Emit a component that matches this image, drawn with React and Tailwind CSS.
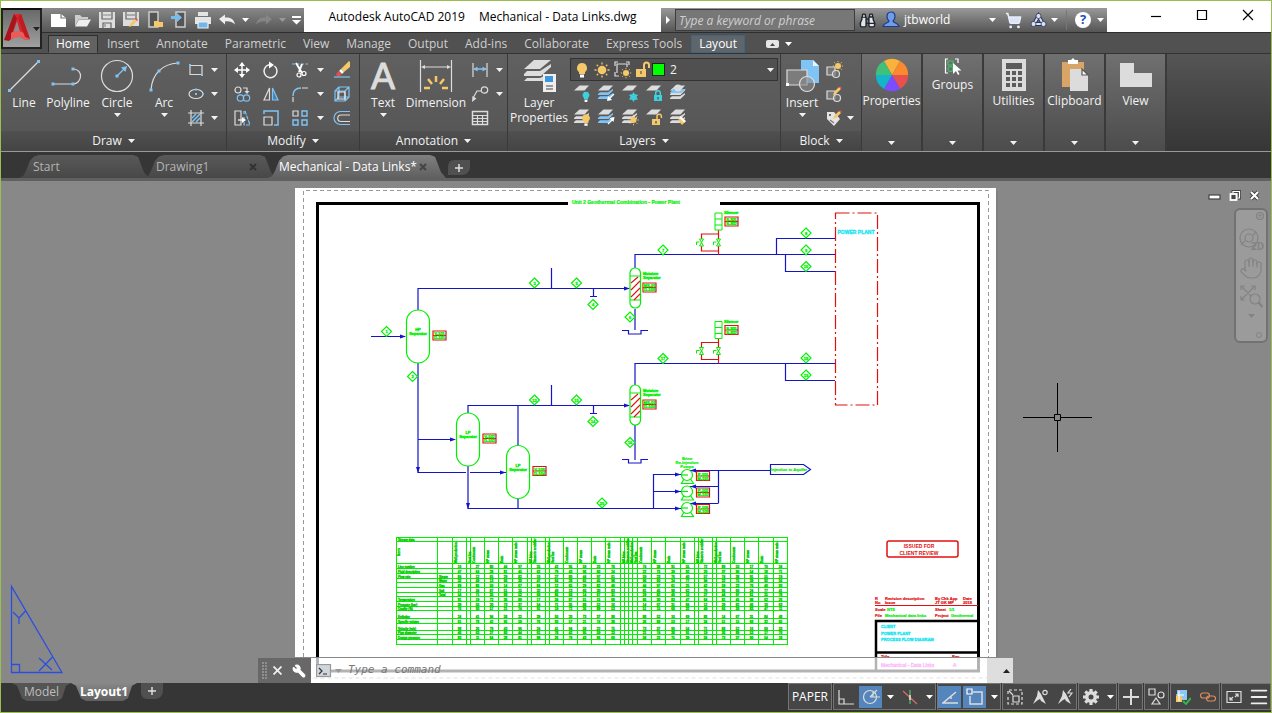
import React, { useState } from 'react';
import { Wrench, Hand, ShoppingCart, Binoculars, Settings, Menu } from 'lucide-react';

const LIGHT = '#dcdcdc';
const BLUE = '#7fc4f5';
const GOLD = '#f5c869';

const Caret = ({ className = '' }) => (
  <svg width="7" height="4" viewBox="0 0 7 4" className={`shrink-0 ${className}`}>
    <path d="M0 0h7L3.500 4z" fill="currentColor" />
  </svg>
);

const Glyph = ({ size = 18, w, h, children }) => (
  <svg
    width={w || size}
    height={h || size}
    viewBox={`0 0 ${w || size} ${h || size}`}
    fill="none"
    stroke={LIGHT}
    strokeWidth="1.2"
    className="shrink-0"
  >
    {children}
  </svg>
);

// Small square handle used at the ends of the drawing tools
const Dot = ({ x, y }) => <rect x={x - 1.5} y={y - 1.5} width="3" height="3" fill={BLUE} stroke="none" />;
const TinyDot = ({ x, y }) => <rect x={x - 1} y={y - 1} width="2" height="2" fill={BLUE} stroke="none" />;

const Bulb = ({ x, y, s = 1, fill = GOLD }) => (
  <g transform={`translate(${x} ${y}) scale(${s})`} stroke="none">
    <path d="M0 -6a5 5 0 0 1 3 9v2h-6v-2a5 5 0 0 1 3-9z" fill={fill} />
    <rect x="-2" y="5.500" width="4" height="3" fill="#fff" />
  </g>
);

const Sun = ({ x, y, s = 1 }) => (
  <g transform={`translate(${x} ${y}) scale(${s})`} stroke={GOLD} strokeWidth="1.3">
    <circle r="4.300" fill={GOLD} stroke="none" />
    <path d="M0-7.500v2M0 5.500v2M-7.500 0h2M5.500 0h2M-5.300-5.300l1.400 1.400M3.900 3.900l1.400 1.400M-5.300 5.300l1.400-1.400M3.900-3.900l1.400-1.400" />
  </g>
);

const Padlock = ({ x, y, fill = GOLD, open }) => (
  <g transform={`translate(${x} ${y})`}>
    <rect x="-4" y="-1" width="8" height="6" fill={fill} stroke="none" />
    <path d={open ? 'M1 -1v-2.500a2.200 2.200 0 0 1 4.400 0V-2' : 'M-2.300 -1v-2a2.300 2.300 0 0 1 4.600 0v2'} stroke={fill} strokeWidth="1.500" />
    <rect x="-0.700" y="1" width="1.400" height="2.500" fill="#5a5a5a" stroke="none" />
  </g>
);

// Stack of sheets, the base of every layer icon
const Sheets = ({ n = 3, mid = LIGHT }) => (
  <g stroke="none">
    {n > 2 && <path d="M1 14l2-1.800h8l5-3.200v1.500L11.500 15H1z" fill={mid} />}
    {n > 1 && <path d="M1 10l2-1.800h8l5-3.200v1.500L11.500 11H1z" fill={mid} />}
    <path d="M6.500 1.500H16L11.500 6.500H1z" fill={LIGHT} />
  </g>
);

const Pencil = ({ x, y }) => (
  <g transform={`translate(${x} ${y})`} stroke="none">
    <path d="M0 8l1-3 5-5 2 2-5 5z" fill={GOLD} />
    <path d="M6 0l1-1 2 2-1 1z" fill="#e0504a" />
  </g>
);

const QuickIcons = [
  ['New', <Glyph key="n" h={16}><path d="M1 2h10l5 4v9H1z" fill="#fff" stroke="none" /><path d="M11 2v4h5" stroke="#777" /></Glyph>],
  ['Open', <Glyph key="o" h={16}><path d="M1 14V3h5l2 2h6v2H5z" fill="#ccc" stroke="none" /><path d="M5 7.500h12l-4 7H1z" fill="#eee" stroke="none" /></Glyph>],
  ['Save', <Glyph key="s" h={18}><path d="M1 1h16v16H1z" fill="#ddd" stroke="none" /><path d="M4 1v7h10V1M5 17v-5h8v5" stroke="#666" /><path d="M5 4h8M7 13v3" stroke="#888" /></Glyph>],
  ['Save As', <Glyph key="a" h={18}><path d="M1 1h16v14H1z" fill="#ddd" stroke="none" /><path d="M4 1v7h10V1" stroke="#666" /><path d="M5 4h8" stroke="#888" /><Pencil x={7} y={8} /></Glyph>],
  ['Open from Mobile', <Glyph key="m" h={18}><path d="M3 1h9v15H3z" fill="#555" stroke="#ccc" strokeWidth="1.500" /><path d="M8 16v-6h4l1 1h4v5z" fill={GOLD} stroke="none" /></Glyph>],
  ['Save to Mobile', <Glyph key="t" h={18}><path d="M6 1h9v15H6z" fill="#555" stroke="#ccc" strokeWidth="1.500" /><path d="M1 5h6V2l5 4.500L7 11V8H1z" fill="#75bdf0" stroke="none" /></Glyph>],
  ['Plot', <Glyph key="p" h={18}><path d="M4 1h10v4H4zM1 6h16v7H1z" fill="#e4e4e4" stroke="none" /><path d="M4 11h10v6H4z" fill="#6fb6ea" stroke="#eee" /></Glyph>],
];

const TitleBar = () => (
  <header className="relative flex h-[31px] bg-white text-black">
    <button aria-label="Application menu" className="absolute left-0 top-[7px] z-10 flex h-[41px] w-[41px] items-center border-2 border-t-[#111] border-[#222] bg-gradient-to-b from-[#6a6a6a] to-[#a0a0a0] text-[#222]">
      <svg width="30" height="34" viewBox="0 0 30 34" className="shrink-0">
        <path d="M11 2h7l9 25-4 1-7-4-5 1-4 3-5-1z" fill="#d6262e" />
        <path d="M11 2l3 4-6 20-2 3-5-1z" fill="#a8141c" />
        <path d="M14 9l-4 12 7-1z" fill="#8c8c8c" />
        <path d="M8 21c5-3 9-2 13 0l6 6-4 1c-5-4-10-4-15 0z" fill="#ec5a5a" />
        <path d="M15 6l3-4 9 25-5-2z" fill="#be1b23" />
      </svg>
      <Caret />
    </button>
    <div className="mt-[7px] ml-[41px] flex w-[262px] items-center gap-[6px] bg-gradient-to-b from-[#888] to-[#565656] pl-2 text-white">
      {QuickIcons.map(([label, icon]) => (
        <button key={label} aria-label={label}>{icon}</button>
      ))}
      <button aria-label="Undo"><Glyph h={12}><path d="M1 5l6-4.500v3c6-.5 9 2 10 7-3-3-6-3.500-10-3v3z" fill="#eee" stroke="none" /></Glyph></button>
      <Caret />
      <button aria-label="Redo"><Glyph h={12}><path d="M17 5l-6-4.500v3c-6-.5-9 2-10 7 3-3 6-3.500 10-3v3z" fill="#858585" stroke="none" /></Glyph></button>
      <Caret className="text-[#999]" />
      <button aria-label="Customize"><Glyph size={9}><path d="M0 1h9" stroke="#fff" strokeWidth="2" /><path d="M0 4h9L4.500 8.500z" fill="#fff" stroke="none" /></Glyph></button>
    </div>
    <h1 className="flex flex-1 items-center justify-center gap-[14px] whitespace-nowrap text-[12px]">
      <span>Autodesk AutoCAD 2019</span>
      <span>Mechanical - Data Links.dwg</span>
    </h1>
    <div className="mt-[7px] flex w-[446px] items-center bg-gradient-to-b from-[#999] to-[#555] text-white">
      <button aria-label="Toggle search" className="flex w-[14px] justify-center"><Glyph w={4} h={8}><path d="M0 0l4 4-4 4z" fill="#fff" stroke="none" /></Glyph></button>
      <input aria-label="Search" placeholder="Type a keyword or phrase" className="h-[22px] w-[180px] border border-[#3c3c3c] bg-[#777] px-[3px] text-[12px] italic placeholder:text-[#cfcfcf]" />
      <button aria-label="Find" className="ml-1 text-[#1d2430]"><Binoculars size={17} fill="#e4e4e4" strokeWidth={2} /></button>
      <button className="ml-[6px] flex items-center gap-1 text-[12px]">
        <Glyph><path d="M9 1c3 0 4 2 4 4.500 0 2-1 3.500-2 4.500 0 2 5 1.500 6 5.500H1c1-4 6-3.500 6-5.500-1-1-2-2.500-2-4.500C5 3 6 1 9 1z" fill="#6f9ceb" stroke="#1c3b86" /></Glyph>
        jtbworld
      </button>
      <Caret className="ml-auto" />
      <button aria-label="App store" className="ml-[9px] text-[#e8ecff]"><ShoppingCart size={17} fill="#dfe4f4" /></button>
      <button aria-label="Stay connected" className="ml-2">
        <Glyph w={17} h={16}>
          <path d="M8.500 4L4 12h9z" stroke="#2b3558" strokeWidth="4" />
          <path d="M8.500 4L4 12h9z" stroke="#dbe2f8" strokeWidth="2" />
          <circle cx="8.500" cy="4" r="2.500" fill="#dbe2f8" stroke="#2b3558" strokeWidth="0.800" />
          <circle cx="3.500" cy="12" r="2.500" fill="#dbe2f8" stroke="#2b3558" strokeWidth="0.800" />
          <circle cx="13.500" cy="12" r="2.500" fill="#dbe2f8" stroke="#2b3558" strokeWidth="0.800" />
        </Glyph>
      </button>
      <Caret className="ml-1" />
      <span className="mx-2 h-5 w-px bg-[#777]" />
      <button aria-label="Help" className="flex h-4 w-4 items-center justify-center rounded-full bg-white text-[13px] font-bold text-[#1c4fc4]">?</button>
      <Caret className="ml-[6px] mr-[3px]" />
    </div>
    <div className="flex w-[164px] items-start justify-end gap-[34px] pr-[17px] pt-2">
      <button aria-label="Minimize"><Glyph w={12} h={12}><path d="M1 7.500h10" stroke="#000" /></Glyph></button>
      <button aria-label="Maximize"><Glyph w={12} h={12}><path d="M1.500 1.500h9v9h-9z" stroke="#000" /></Glyph></button>
      <button aria-label="Close"><Glyph w={12} h={12}><path d="M1 1l10 10M11 1L1 11" stroke="#000" /></Glyph></button>
    </div>
  </header>
);

const menuTabs = ['Home', 'Insert', 'Annotate', 'Parametric', 'View', 'Manage', 'Output', 'Add-ins', 'Collaborate', 'Express Tools', 'Layout'];

const RibbonTabs = () => {
  const [active, setActive] = useState('Home');
  return (
    <nav className="flex h-[21px] items-end gap-px border-t border-[#2e2e2e] bg-[#515151] pl-[47px] text-[12px] text-[#cfcfcf]">
      {menuTabs.map((tab) => (
        <button
          key={tab}
          onClick={() => setActive(tab)}
          className={`whitespace-nowrap border px-[7px] leading-[16px] ${
            tab === active
              ? 'border-[#2e2e2e] border-b-[#626262] bg-[#626262] text-white'
              : tab === 'Layout'
                ? 'border-[#3e6684] bg-[#5e666c] text-white'
                : 'border-transparent'
          }`}
        >
          {tab}
        </button>
      ))}
      <button aria-label="Minimize ribbon" className="mb-[5px] ml-5 flex items-center gap-[6px] text-white">
        <Glyph w={13} h={8}><rect width="13" height="8" rx="2" fill="#e6e6e6" stroke="none" /><path d="M4 6l2.500-3L9 6z" fill="#444" stroke="none" /></Glyph>
        <Caret />
      </button>
    </nav>
  );
};

const Panel = ({ title, width, children }) => (
  <section className={`flex shrink-0 flex-col border-r border-[#3a3a3a] ${width}`}>
    <div className="flex flex-1 bg-gradient-to-b from-[#606060] to-[#575757] pt-1">{children}</div>
    <button className="flex h-5 items-center justify-center gap-[6px] bg-gradient-to-b from-[#505050] to-[#444]">
      {title}
      <Caret />
    </button>
  </section>
);

const BigButton = ({ label, width, drop, children }) => (
  <button className={`flex shrink-0 flex-col items-center ${width}`}>
    <span className="flex h-9 items-center justify-center">{children}</span>
    <span className="mt-px leading-[15px]">{label}</span>
    {drop && <Caret className="mt-[3px]" />}
  </button>
);

// Column of small tools, one tool on each 24px row
const ToolColumn = ({ icons, width = 'w-6' }) => (
  <div className={`flex shrink-0 flex-col ${width}`}>
    {icons.map(([label, icon]) => (
      <button key={label} aria-label={label} className="flex h-6 items-center justify-center">{icon}</button>
    ))}
  </div>
);

const CaretColumn = ({ rows }) => (
  <div className="flex w-[10px] shrink-0 flex-col">
    {rows.map((on, i) => (
      <span key={i} className="flex h-6 items-center justify-center">{on ? <Caret /> : null}</span>
    ))}
  </div>
);

const drawTools = [
  ['Rectangle', <Glyph key="r"><path d="M3 4.500h12v9H3z" /><TinyDot x={3} y={4} /><TinyDot x={15} y={14} /></Glyph>],
  ['Ellipse', <Glyph key="e"><ellipse cx="9" cy="9" rx="7" ry="4.500" /><TinyDot x={9} y={9} /><TinyDot x={16} y={9} /><TinyDot x={9} y={4.5} /></Glyph>],
  ['Hatch', <Glyph key="h"><path d="M4 1v16M14 1v16M1 4h16M1 14h16" /><path d="M5 9l4-4M5 13l8-8M9 13l4-4" stroke={BLUE} strokeWidth="1.500" /></Glyph>],
];

const modifyA = [
  ['Move', <Glyph key="m"><path d="M9 2v14M2 9h14" stroke="#fff" strokeWidth="1.500" /><path d="M9 1l3 4H6zM9 17l3-4H6zM1 9l4-3v6zM17 9l-4-3v6z" fill="#fff" stroke="none" /></Glyph>],
  ['Copy', <Glyph key="c"><circle cx="5" cy="5" r="3" /><path d="M10 3h4v4" /><path d="M11.500 6l2.500 3 2.500-3z" fill={LIGHT} stroke="none" /><circle cx="7.500" cy="13" r="3.200" stroke={BLUE} /><circle cx="13.500" cy="13" r="3.200" stroke={BLUE} /></Glyph>],
  ['Stretch', <Glyph key="s"><path d="M2 2h6v14H2z" /><path d="M11 2v3M11 8v8h6L12 2" stroke={BLUE} strokeDasharray="4 1" /><path d="M5 11h5" stroke="#fff" /><path d="M9 8l4 3-4 3z" fill="#fff" stroke="none" /></Glyph>],
];
const modifyB = [
  ['Rotate', <Glyph key="r"><path d="M12.500 5A6.500 6.500 0 1 1 7 3.800" stroke="#eee" strokeWidth="1.500" /><path d="M7 0.500l5 3.500-5 3.500z" fill="#fff" stroke="none" /></Glyph>],
  ['Mirror', <Glyph key="m"><path d="M7.500 3v12H2z" /><path d="M10.500 3v12H16z" fill="#4b7fa8" stroke={BLUE} /></Glyph>],
  ['Scale', <Glyph key="s"><path d="M2 5V2h14v14h-4" stroke={BLUE} strokeWidth="1.500" /><path d="M2 8h8v8H2z" /></Glyph>],
];
const modifyC = [
  ['Trim', <Glyph key="t"><path d="M1 3h16" stroke={BLUE} strokeDasharray="3 1.500" /><path d="M5 2l6 10M11 3L8 11" stroke="#fff" strokeWidth="2" /><circle cx="8" cy="14" r="2" stroke="#fff" /><circle cx="13" cy="12.500" r="2" stroke="#fff" /></Glyph>],
  ['Fillet', <Glyph key="f"><path d="M2 11c0-5 3-8 8-8" stroke={BLUE} strokeWidth="1.500" /><path d="M2 12v5M11 3h6" /></Glyph>],
  ['Array', <Glyph key="a"><path d="M2 2h5v5H2z" /><path d="M11 2h5v5h-5zM2 11h5v5H2zM11 11h5v5h-5z" stroke={BLUE} strokeWidth="1.400" /></Glyph>],
];
const modifyD = [
  ['Erase', <Glyph key="e"><path d="M8 8l8-8 1 1v5l-6 5z" fill={GOLD} stroke="none" /><path d="M8 8l3 3-2 2-3-3z" fill="#fff" stroke="none" /><path d="M6 10l3 3-2 2H4l-1-2z" fill="#e0504a" stroke="none" /><path d="M1 16h16" stroke={BLUE} /></Glyph>],
  ['Box', <Glyph key="b"><path d="M2 6h10v10H2zM6 2h10v10H6zM2 6l4-4M12 6l4-4M12 16l4-4M2 16l4-4" stroke={BLUE} /><path d="M5 7h7v7H5z" stroke="#eee" /></Glyph>],
  ['Offset', <Glyph key="o"><path d="M17 2.500H7.500a6.500 6.500 0 0 0 0 13H17" stroke={BLUE} /><path d="M17 6H8a3.200 3.200 0 0 0 0 6.500H17" /></Glyph>],
];
const noteTools = [
  ['Linear', <Glyph key="l"><path d="M2 2v14M16 2v14" /><path d="M3 8h12" stroke={BLUE} strokeWidth="1.500" /><path d="M2.500 8l4-2.500v5zM15.500 8l-4-2.500v5z" fill={BLUE} stroke="none" /></Glyph>],
  ['Leader', <Glyph key="l"><circle cx="13.500" cy="5" r="3.200" /><path d="M10 6H6l-4 7" /><path d="M1 17l.5-6 4 2.500z" fill={LIGHT} stroke="none" /></Glyph>],
  ['Table', <Glyph key="t"><path d="M1.500 2.500h15v13h-15z" strokeWidth="1.500" /><path d="M1 6.500h16M1 9.500h16M1 12.500h16M6.500 6v10M11.500 6v10" /></Glyph>],
];
const blockTools = [
  ['Create block', <Glyph key="c"><path d="M2 6h8v8H2z" fill="#777" /><circle cx="11" cy="13" r="3.500" fill="#777a" /><Sun x={13} y={5} s={0.7} /></Glyph>],
  ['Edit block', <Glyph key="e"><path d="M2 6h8v8H2z" fill="#777" /><circle cx="12" cy="13" r="3.500" fill="#777a" /><Pencil x={8} y={2} /></Glyph>],
  ['Edit attributes', <Glyph key="a"><path d="M2 3h7l6 7-6 7-7-7z" fill="#e4e4e4" stroke="none" /><circle cx="5" cy="6" r="1" fill="#444" stroke="none" /><path d="M5 11l4 3" stroke="#777" /><Pencil x={8} y={2} /></Glyph>],
];

const Frost = () => (
  <g stroke="#3fd0e0" strokeWidth="1.500"><path d="M12.500 8.500v9M8.500 10.800l8 4.500M8.500 15.300l8-4.500" /><circle cx="12.500" cy="13" r="2.500" /></g>
);
const layerRows = [
  [
    ['Layer off', <Glyph key="1"><Sheets n={1} /><Bulb x={13} y={12} s={0.7} fill="#3fd0e0" /></Glyph>],
    ['Layer isolate', <Glyph key="2"><Sheets mid={BLUE} /><path d="M17 10l-5 5" stroke="#fff" /><path d="M10 17l1-5 4 4z" fill="#fff" stroke="none" /></Glyph>],
    ['Layer freeze', <Glyph key="3"><Sheets n={1} /><Frost /></Glyph>],
    ['Layer lock', <Glyph key="4"><Sheets n={1} /><Padlock x={13} y={12} fill="#3fd0e0" /></Glyph>],
    ['Make current', <Glyph key="5"><Sheets mid={LIGHT} /><path d="M4 5h13l-5 4H1z" fill={BLUE} stroke="none" /><circle cx="9" cy="4" r="3.500" fill="#ddd" stroke="none" /></Glyph>],
  ],
  [
    ['Turn all on', <Glyph key="1"><Sheets /><Bulb x={13} y={11} s={0.8} /></Glyph>],
    ['Unisolate', <Glyph key="2"><Sheets mid={BLUE} /><path d="M11 16l5-5" stroke="#fff" /><path d="M17.500 9l-1 5-4-4z" fill="#fff" stroke="none" /></Glyph>],
    ['Thaw all', <Glyph key="3"><Sheets /><Sun x={12.5} y={12} s={0.7} /></Glyph>],
    ['Unlock', <Glyph key="4"><Sheets n={1} /><Padlock x={11} y={12} open /></Glyph>],
    ['Match layer', <Glyph key="5"><Sheets /><path d="M9 12l4-3 4 4-4 4z" fill={GOLD} stroke="none" /><path d="M11 9l5 5" stroke="#fff" strokeWidth="2" /></Glyph>],
  ],
];

const wheel = ['#f9b23c', '#fb8a2e', '#e8504f', '#7c4dff', '#12b5c9', '#41c07a'];

const ColorWheel = () => (
  <svg width="34" height="34" viewBox="-17 -17 34 34">
    {wheel.map((c, i) => (
      <path key={c} d="M0 0L-8 -14A16 16 0 0 1 8 -14z" fill={c} transform={`rotate(${i * 60})`} />
    ))}
  </svg>
);

const Collapsed = ({ label, children }) => (
  <button className="flex w-[61px] shrink-0 flex-col items-center border-r-2 border-[#3a3a3a] bg-gradient-to-b from-[#707070] to-[#4c4c4c] pt-1">
    {children}
    <span className="mt-px leading-[15px]">{label}</span>
    <Caret className="mb-[6px] mt-auto" />
  </button>
);

const Ribbon = () => (
  <div className="flex h-[99px] border-b border-t border-b-[#999] border-t-[#333] bg-gradient-to-b from-[#555] to-[#363636] text-[12px] text-[#f2f2f2]">
    <Panel title="Draw" width="w-[226px]">
      <BigButton label="Line" width="w-[46px]">
        <Glyph size={34}><path d="M3 31L31 3" /><Dot x={2.5} y={31.5} /><Dot x={31.5} y={2.5} /></Glyph>
      </BigButton>
      <BigButton label="Polyline" width="w-[42px]">
        <Glyph size={34}><path d="M2 25h20c9 0 11-15 0-15" /><Dot x={2} y={25} /><Dot x={22} y={25} /><Dot x={22} y={10} /></Glyph>
      </BigButton>
      <BigButton label="Circle" width="w-[56px]" drop>
        <Glyph size={34}><circle cx="17" cy="17" r="15.500" /><path d="M17 17l7-7" stroke={BLUE} /><path d="M27 7l-1.500 6-4.500-4.500z" fill={BLUE} stroke="none" /><Dot x={17} y={17} /></Glyph>
      </BigButton>
      <BigButton label="Arc" width="w-[38px]" drop>
        <Glyph size={34}><path d="M4 31C5 15 15 5 31 4" /><Dot x={4} y={31} /><Dot x={12} y={12} /><Dot x={31} y={4} /></Glyph>
      </BigButton>
      <ToolColumn icons={drawTools} width="w-[26px]" />
      <CaretColumn rows={[1, 1, 1]} />
    </Panel>
    <Panel title="Modify" width="w-[133px]">
      <ToolColumn icons={modifyA} width="w-[30px]" />
      <ToolColumn icons={modifyB} width="w-[28px]" />
      <ToolColumn icons={modifyC} width="w-[30px]" />
      <CaretColumn rows={[1, 1, 1]} />
      <ToolColumn icons={modifyD} width="w-[34px]" />
    </Panel>
    <Panel title="Annotation" width="w-[148px]">
      <BigButton label="Text" width="w-[46px]" drop>
        <svg width="34" height="36" viewBox="0 0 34 36" className="overflow-visible">
          <text x="17" y="31" textAnchor="middle" fontSize="36" fill={LIGHT} stroke={LIGHT} fontFamily="'Liberation Sans', sans-serif">A</text>
        </svg>
      </BigButton>
      <BigButton label="Dimension" width="w-[60px]">
        <Glyph size={34}>
          <path d="M1.500 1v32M32.500 1v32M4 8h26" /><path d="M2 8l4-2v4zM32 8l-4-2v4z" fill={LIGHT} stroke="none" />
          <path d="M17 17v6M9 20l4 5M25 20l-4 5M5 29h6M29 29h-6" stroke={GOLD} strokeWidth="2.500" />
        </Glyph>
      </BigButton>
      <ToolColumn icons={noteTools} width="w-[28px]" />
      <CaretColumn rows={[1, 1, 0]} />
    </Panel>
    <Panel title="Layers" width="w-[273px]">
      <BigButton label={<>Layer<br />Properties</>} width="w-[62px]">
        <Glyph size={34}>
          <g stroke="none" fill={LIGHT}>
            <path d="M12 1h17L18 10H2z" /><path d="M2 15l3-3h13l11-7v3L19 17H2z" /><path d="M2 22l3-3h13l4-2v5H2z" />
            <rect x="21" y="15" width="13" height="18" fill="#eee" />
            <rect x="23" y="17" width="8" height="6" fill="#3b97dd" />
          </g>
          <path d="M24 27h7M24 30h7" stroke="#444" />
        </Glyph>
      </BigButton>
      <div className="flex flex-col">
        <div className="flex h-[23px] w-[208px] items-center gap-[2px] border border-[#333] bg-[#505050] px-[3px]">
          <Glyph><Bulb x={8} y={8} /></Glyph>
          <Glyph><Sun x={8} y={9} /></Glyph>
          <Glyph><path d="M3 12V3h10v3M1 5V1h3M12 1h3v3M1 11v4h4" /><Sun x={12} y={12} s={0.7} /></Glyph>
          <Glyph><rect x="2" y="8" width="10" height="8" fill={GOLD} stroke="none" /><path d="M10 8V4a2.500 2.500 0 0 1 5 0v3" stroke={GOLD} strokeWidth="2" /><path d="M7 10v3" stroke="#555" /></Glyph>
          <span className="ml-[-2px] h-[13px] w-[13px] border border-[#222] bg-[#00ff00]" />
          <select aria-label="Layer" defaultValue="2" className="h-5 flex-1 appearance-none bg-transparent pl-[3px]">
            <option>2</option>
            <option>0</option>
          </select>
          <Caret className="-ml-3" />
        </div>
        {layerRows.map((row, i) => (
          <div key={i} className="flex h-6">
            {row.map(([label, icon]) => (
              <button key={label} aria-label={label} className="flex w-6 items-center justify-center">{icon}</button>
            ))}
          </div>
        ))}
      </div>
    </Panel>
    <Panel title="Block" width="w-[81px]">
      <BigButton label="Insert" width="w-[42px]" drop>
        <Glyph w={34} h={34}>
          <path d="M16 1h12l6 6v17H16z" fill={BLUE} stroke="none" /><path d="M28 1l6 6h-6z" fill="#e8f4ff" stroke="none" />
          <path d="M2 11h20v15H2z" fill="#7c7c7c" /><circle cx="22" cy="25" r="7.500" fill="#8b8b8b99" />
          <rect x="1" y="24" width="3" height="3" fill="#fff" stroke="none" />
        </Glyph>
      </BigButton>
      <ToolColumn icons={blockTools} width="w-[22px]" />
      <CaretColumn rows={[0, 0, 1]} />
    </Panel>
    <Collapsed label="Properties">
      <ColorWheel />
    </Collapsed>
    <Collapsed label="Groups">
      <Glyph><path d="M4 1H1.500v14H4M11 1h3v4" stroke="#fff" /><path d="M4 3h5v4H4z" stroke="#3ec46a" /><circle cx="6.500" cy="11" r="2.500" stroke="#3ec46a" /><path d="M9 5v11l3-3 2 4 1.500-1-2-3.500h4z" fill="#fff" stroke="none" /></Glyph>
    </Collapsed>
    <Collapsed label="Utilities">
      <Glyph w={26} h={34}>
        <rect x="1" y="1" width="24" height="32" fill={LIGHT} stroke="none" />
        <rect x="5" y="5" width="16" height="6" fill="#5c5c5c" stroke="none" />
        {[13, 19, 25].map((y) => [5, 11, 17].map((x) => <rect key={`${x}-${y}`} x={x} y={y} width="4" height="4" fill="#5c5c5c" stroke="none" />))}
      </Glyph>
    </Collapsed>
    <Collapsed label="Clipboard">
      <Glyph w={28} h={34}>
        <path d="M1 4h22v25H1z" fill="#d8a566" stroke="none" /><path d="M7 2h3l2-2 2 2h3v4H7z" fill="#fff" stroke="none" />
        <path d="M9 11h12l6 6v16H9z" fill={LIGHT} stroke="none" /><path d="M21 11v6h6z" fill="#fff" stroke="#555" />
      </Glyph>
    </Collapsed>
    <Collapsed label="View">
      <Glyph size={34}><path d="M1 5h14v10h18v14H1z" fill={LIGHT} stroke="none" /></Glyph>
    </Collapsed>
  </div>
);

const tabShape = '[clip-path:polygon(0_100%,4px_92%,7px_70%,11px_25%,15px_6%,20px_0,calc(100%_-_16px)_0,calc(100%_-_11px)_8%,calc(100%_-_5px)_75%,100%_100%)]';
const footShape = '[clip-path:polygon(0_0,5px_15%,10px_85%,15px_100%,calc(100%_-_14px)_100%,calc(100%_-_9px)_85%,calc(100%_-_5px)_15%,100%_0)]';

const FileTabs = () => (
  <div className="flex h-[29px] items-end border-b-[3px] border-[#606060] bg-[#363636] pl-[18px] text-[12px] text-[#b4b4b4]">
    <button className={`h-[23px] w-[130px] bg-gradient-to-b from-[#595959] to-[#484848] pl-[14px] text-left ${tabShape}`}>Start</button>
    <button className={`-ml-[5px] flex h-[23px] w-[132px] items-center justify-between bg-gradient-to-b from-[#595959] to-[#484848] pl-[12px] pr-[19px] ${tabShape}`}>
      Drawing1 <Glyph size={8}><path d="M1 1l6 6M7 1L1 7" stroke="#333" strokeWidth="2" /></Glyph>
    </button>
    <button className={`-ml-2 flex h-[23px] w-[178px] items-center justify-between bg-gradient-to-b from-[#808080] to-[#606060] pl-[11px] pr-[19px] text-white ${tabShape}`}>
      Mechanical - Data Links* <Glyph size={8}><path d="M1 1l6 6M7 1L1 7" stroke="#444" strokeWidth="2" /></Glyph>
    </button>
    <button aria-label="New tab" className="mb-[3px] ml-[2px] flex h-[15px] w-[22px] items-center justify-center rounded-br-lg rounded-tl-md bg-[#505050]">
      <Glyph size={8}><path d="M4 0v8M0 4h8" stroke="#ddd" strokeWidth="1.500" /></Glyph>
    </button>
  </div>
);

/* ---- Sheet drawing ---- */

const PIPE = '#1414c8';
const GREEN = '#00f000';
const RED = '#e01010';

const Tag = ({ x, y, a = 'V-101', b = 'D-201' }) => (
  <g>
    <path d={`M${x} ${y}h13v9h-13zM${x} ${y + 4.5}h13`} fill="none" stroke={RED} strokeWidth="1.200" />
    <g fontSize="4" textAnchor="middle" fill={GREEN} stroke={GREEN} strokeWidth="0.500">
      <text x={x + 6.5} y={y + 4}>{a}</text>
      <text x={x + 6.5} y={y + 8}>{b}</text>
    </g>
  </g>
);

const diamonds = [
  [386.5, 331.5, 1], [412.5, 376.5, 2], [534.5, 283, 3], [576.5, 283, 5], [593, 304.5, 4], [630, 317, 6], [663, 250, 7],
  [806, 233, 8], [806, 250, 9], [806, 266.5, 10], [663, 358.5, 17], [806, 358, 18], [806, 375, 19],
  [534.5, 400, 13], [576.5, 400, 15], [593, 421.5, 14], [630, 442.5, 16], [602, 503, 20],
];

const Vessel = ({ x, y, name, a, b }) => (
  <g>
    <rect x={x - 11.5} y={y} width="23" height="53" rx="11.500" fill="#fff" stroke={GREEN} strokeWidth="1.200" />
    <g fontSize="4" textAnchor="middle" fill={GREEN} stroke={GREEN} strokeWidth="0.500">
      <text x={x} y={y + 21}>{name}</text>
      <text x={x} y={y + 25}>Separator</text>
    </g>
    <Tag x={x + 15} y={y + 21} a={a} b={b} />
  </g>
);

const Column = ({ y }) => (
  <g>
    <rect x="630" y={y} width="10.500" height="40" rx="5" fill="#fff" stroke={GREEN} strokeWidth="1.200" />
    <path d={`M630 ${y + 8}h10.500M630 ${y + 32}h10.500`} stroke={GREEN} />
    <path d={`M631 ${y + 15}l7-6M631 ${y + 22}l9-9M631 ${y + 29}l9-9M634 ${y + 32}l6-6`} stroke={RED} strokeWidth="1.100" />
    <g fontSize="4" fill={GREEN} stroke={GREEN} strokeWidth="0.500">
      <text x="643" y={y + 7}>Moisture</text>
      <text x="643" y={y + 11}>Separator</text>
    </g>
    <Tag x={643} y={y + 15} a="MS-01" b="D-103" />
  </g>
);

const Silencer = ({ y }) => (
  <g fill="none">
    <path d={`M718.500 ${y + 17}v25M718.500 ${y + 21}h-17v17h17`} stroke={RED} strokeWidth="1.200" />
    <path d={`M715 ${y}h7v17h-7zM715 ${y + 6}h7M715 ${y + 12}h7`} stroke={GREEN} />
    {[701.5, 718.5].map((x) => (
      <path key={x} d={`M${x - 2} ${y + 26}h4l-4 7h4zM${x - 2} ${y + 29}h-3v3`} fill="#fff" stroke={GREEN} />
    ))}
    <text x="724" y={y + 1} fontSize="4" fill={GREEN} stroke={GREEN} strokeWidth="0.500">Silencer</text>
    <Tag x={725} y={y + 4} a="S-301" b="S-302" />
  </g>
);

const Arrow = ({ x, y, dir = 0 }) => (
  <path d="M0 0l-6-2v4z" fill={PIPE} transform={`translate(${x} ${y}) rotate(${dir})`} />
);

const tableX = [396.5, 437.5, 452.5, 466.5, 470.5, 484.5, 498.5, 512.5, 527.5, 531.5, 545.5, 549.5, 563.5, 577.5, 591.5, 605.5, 620.5, 624.5, 628.5, 632.5, 637.5, 651.5, 665.5, 680.5, 694.5, 698.5, 712.5, 716.5, 730.5, 744.5, 758.5, 773.5, 787.5];
const tableY = [537.5, 541.5, 563.5, 568.5, 573.5, 578.5, 582.5, 587.5, 592.5, 596.5, 601.5, 606.5, 610.5, 618.5, 623.5, 630.5, 634.5, 639.5, 644.5];
const rowNames = ['Line number', 'Fluid description', 'Flow rate', '', '', '', '', 'Temperature', 'Pressure (bar)', 'Quality (%)', 'Enthalpy', 'Specific volume', 'Velocity (m/s)', 'Pipe diameter', 'Design pressure'];
const rowUnits = ['', '', 'Steam', 'Water', 'Gas', 'Salt', 'Total'];
const headNames = ['Well production', 'HP steam', 'HP brine', 'Vent line', 'Drain', 'Steam to scrubber', 'Condensate', 'HP steam main'];

const StreamTable = () => (
  <g fill={GREEN}>
    <path
      d={tableX.map((x) => `M${x} 537v108`).join('') + tableY.map((y) => `M396 ${y}h392`).join('')}
      stroke={GREEN}
      strokeWidth="1"
      fill="none"
    />
    <g stroke="#00c800" strokeWidth="0.400" fill="#00c800">
      <text x="398" y="541" fontSize="3">Stream data</text>
      <text transform="translate(400 556) rotate(-90)" fontSize="4">Item</text>
      {tableX.slice(2, -1).map((x, i) => (
        <text key={x} transform={`translate(${x + 4} 563) rotate(-90)`} fontSize="3">{headNames[(i * 3) % 8]}</text>
      ))}
      {rowNames.map((name, r) => (
        <g key={r} fontSize="3">
          <text x="398" y={tableY[r + 3] - 1}>{name}</text>
          <text x="439" y={tableY[r + 3] - 1}>{rowUnits[r]}</text>
          {tableX.slice(2, -1).map((x, c) =>
            tableX[c + 3] - x > 10 ? (
              <text key={c} x={(x + tableX[c + 3]) / 2} y={tableY[r + 3] - 1} textAnchor="middle">{((r * 37 + c * 53) % 89) + 10}</text>
            ) : null
          )}
        </g>
      ))}
    </g>
  </g>
);

const TitleBlock = () => (
  <g>
    <rect x="887" y="541" width="71" height="16" rx="2" fill="none" stroke={RED} strokeWidth="1.500" />
    <g fontSize="5" fontWeight="bold" fill={RED}>
      <text x="919" y="548" textAnchor="middle">ISSUED FOR</text>
      <text x="919" y="555" textAnchor="middle">CLIENT REVIEW</text>
    </g>
    <g fontSize="4" fontWeight="bold" fill={RED} stroke={RED} strokeWidth="0.200">
      <text x="875" y="600">R</text><text x="885" y="600">Revision description</text><text x="935" y="600">By Chk App</text><text x="963" y="600">Date</text>
      <text x="875" y="604">No</text><text x="885" y="604">Issue</text><text x="935" y="604">JT GK MP</text><text x="963" y="604">2018</text>
      <text x="875" y="611">Scale</text><text x="935" y="611">Sheet</text>
      <text x="875" y="617">File</text><text x="935" y="617">Project</text>
      <text x="881" y="658">Title</text><text x="952" y="658">Rev</text>
    </g>
    <g fontSize="4" fontWeight="bold" fill={GREEN} stroke={GREEN} strokeWidth="0.200">
      <text x="887" y="611">NTS</text><text x="949" y="611">1/1</text>
      <text x="885" y="617">Mechanical data links</text><text x="951" y="617">Geothermal</text>
    </g>
    <path d="M875 605.500h103" stroke={RED} />
    <path d="M978 621H876v50M875 652.500h103" fill="none" stroke="#000" strokeWidth="2.500" />
    <g fontSize="4" fontWeight="bold" fill="#10e4f0" stroke="#10e4f0" strokeWidth="0.300">
      <text x="881" y="628">CLIENT</text>
      <text x="881" y="635">POWER PLANT</text>
      <text x="881" y="641">PROCESS FLOW DIAGRAM</text>
    </g>
    <g fontSize="5" fill="#f020f0" stroke="#f020f0" strokeWidth="0.400">
      <text x="881" y="667">Mechanical - Data Links</text>
      <text x="953" y="667">A</text>
    </g>
  </g>
);

const Sheet = () => (
  <svg width="1270" height="502" viewBox="1 181 1270 502" className="block shrink-0" fontFamily="'Liberation Sans', sans-serif">
    <rect x="298" y="191" width="700" height="500" fill="#808080" />
    <rect x="295" y="188" width="701" height="495" fill="#fff" />
    <path d="M303.500 678V190.500H988.500V678z" fill="none" stroke="#999" strokeDasharray="4 3" />
    <path d="M568 203.500H317.500V671H978.500V203.500H720" fill="none" stroke="#000" strokeWidth="3" />
    <text x="626" y="204" fontSize="5" fontWeight="bold" textAnchor="middle" fill={GREEN} stroke={GREEN} strokeWidth="0.200">Unit 2 Geothermal Combination - Power Plant</text>

    <g fill="none" stroke={PIPE} strokeWidth="1.200">
      <path d="M371 336.500h34M418 311V288.500H629M551.500 268v20M593.500 288v8.500M590 296.500h7M635 268V254.500H835M776.500 254V238.500H835M785.500 254V271.500H835" />
      <path d="M635 309v21M622 330.500h6.500v3.500h12.500v-3.500h7M635 425v35M622 459.500h6.500v3.500h12.500v-3.500h7" />
      <path d="M418 362V472.500H466M470 472.500H506M418 439.500h37M468 413V405.500H629M518 446V405M551.500 385v20M593.500 405v8.500M590 413.500h7M635 385V363.500H835M785.500 363V380.500H835" />
      <path d="M468 466V508.500H681M518 498v10M653.500 508V474.500H681M653.500 491.500H681M690 470.500H770M690 486.500h28.500M690 503.500h28.500M718.500 470v33" />
      <path d="M770.500 464.500h33l7 5-7 5h-33z" />
    </g>
    <Arrow x={406} y={336.5} /><Arrow x={630} y={288.5} /><Arrow x={630} y={405.5} /><Arrow x={456} y={439.5} /><Arrow x={506} y={472.5} />
    <Arrow x={418} y={473} dir={90} /><Arrow x={468} y={509} dir={90} />
    <Arrow x={681} y={474.5} /><Arrow x={681} y={491.5} /><Arrow x={681} y={508.5} />

    <Vessel x={418} y={310} name="HP" a="V-101" b="D-101" />
    <Vessel x={468} y={413} name="LP" a="V-102" b="D-102" />
    <Vessel x={518} y={445.5} name="LP" a="V-103" b="D-104" />
    <Column y={268} />
    <Column y={385} />
    <Silencer y={213} />
    <Silencer y={321.5} />

    {[475, 491.5, 508].map((y, i) => (
      <g key={y}>
        <g fill="#fff" stroke={GREEN} strokeWidth="1.200">
          <path d={`M684 ${y + 4}l-2.500 4.500h12l-3-4.500z`} />
          <circle cx="687" cy={y} r="5.500" />
          <path d={`M682 ${y}h6`} />
        </g>
        <Tag x={696.5} y={y - 3.5} a={`P-10${i + 1}`} b={`M-10${i + 1}`} />
      </g>
    ))}
    {[470.5, 486.5, 503.5].map((y) => <Arrow key={y} x={690} y={y} dir={180} />)}
    <g fontSize="4" fontWeight="bold" textAnchor="middle" fill={GREEN} stroke={GREEN} strokeWidth="0.200">
      <text x="687" y="460">Brine</text>
      <text x="687" y="464">Re-injection</text>
      <text x="687" y="468">Pumps</text>
      <text x="789" y="471">Injection to Aquifer</text>
    </g>

    {diamonds.map(([x, y, n]) => (
      <g key={n}>
        <path d={`M${x} ${y - 5}l5 5-5 5-5-5z`} fill="#fff" stroke={GREEN} strokeWidth="1.200" />
        <text x={x} y={y + 1.5} fontSize="4" fontWeight="bold" textAnchor="middle" fill={GREEN} stroke={GREEN} strokeWidth="0.300">{n}</text>
      </g>
    ))}

    <rect x="835.500" y="213" width="42" height="192" fill="none" stroke={RED} strokeWidth="1.200" strokeDasharray="14 3 2 3" />
    <text x="856" y="234" fontSize="5" fontWeight="bold" textAnchor="middle" fill="#10e4f0" stroke="#10e4f0" strokeWidth="0.300">POWER PLANT</text>

    <StreamTable />
    <TitleBlock />

    {/* UCS icon */}
    <path d="M11.500 586.500v86H62zM11.500 664.500h8v8M13 612l6 6 6.500-7M19 618v6M39 658l13 12M52.500 657l-13.500 14" fill="none" stroke="#2a4fe0" strokeWidth="1.300" />
    {/* Crosshair */}
    <path d="M1023 417.500h31M1061 417.500h31M1057.500 383v31M1057.500 421v31M1054.500 414.500h6v6h-6z" fill="none" stroke="#000" />
  </svg>
);

const NavBar = () => (
  <div className="absolute right-[3px] top-[27px] flex h-[135px] w-[34px] flex-col items-center rounded-md border-2 border-[#727272] bg-[#9b9b9b] text-[#838383]">
    <button aria-label="Close bar" className="mr-[2px] mt-[2px] self-end"><Glyph size={8}><circle cx="4" cy="4" r="3.500" stroke="#838383" /><path d="M2.500 2.500l3 3M5.500 2.500l-3 3" stroke="#838383" /></Glyph></button>
    <button aria-label="Steering wheel" className="mt-[6px]">
      <Glyph size={26}><circle cx="11" cy="12" r="9" stroke="#838383" /><circle cx="11" cy="12" r="4" stroke="#838383" /><path d="M7 15l-4 4M15 9l3-3" stroke="#838383" /><text x="13" y="24" fontSize="10" fontWeight="bold" fill="#838383" stroke="none">2D</text></Glyph>
    </button>
    <button aria-label="Pan" className="mt-1"><Hand size={24} strokeWidth={1.2} /></button>
    <button aria-label="Zoom" className="mt-1">
      <Glyph size={24}><path d="M2 2l14 14M16 2L2 16M2 6V2h4M12 2h4v4M2 12v4h4" stroke="#838383" /><circle cx="16" cy="15" r="5" fill="#9b9b9b" stroke="#838383" /><path d="M19.500 18.500l4 4.500" stroke="#838383" strokeWidth="2.500" /></Glyph>
    </button>
    <Caret className="mt-[6px]" />
    <span className="mb-[3px] mr-1 mt-auto h-[6px] w-[6px] self-end rounded-sm border border-[#838383]" />
  </div>
);

const CommandLine = () => (
  <div className="absolute bottom-0 left-[257px] right-[258px] flex h-[26px] border-t border-[#888]">
    <div className="flex w-[53px] items-center gap-[6px] bg-[#686868] pl-1 text-white">
      <Glyph w={5} h={17}><path d="M1 0v17M4 0v17" stroke="#aaa" strokeDasharray="2 1" /></Glyph>
      <button aria-label="Close command line"><Glyph size={9}><path d="M0.500 0.500l8 8M8.500 0.500l-8 8" stroke="#eee" strokeWidth="1.800" /></Glyph></button>
      <button aria-label="Customize" className="ml-1"><Wrench size={14} fill="#fff" className="-scale-x-100" /></button>
    </div>
    <label className="flex flex-1 items-center bg-white/70 pl-[5px]">
      <Glyph w={16} h={14}><rect x="0.500" y="0.500" width="14" height="12" fill="#cfd6dc" stroke="#999" /><path d="M3 4l3 3-3 3M7 10h4" stroke="#333" /></Glyph>
      <Caret className="ml-[3px] text-[#999]" />
      <input aria-label="Command" placeholder="Type a command" className="ml-[6px] flex-1 bg-transparent font-['DejaVu_Sans_Mono',monospace] text-[11px] italic placeholder:text-[#777]" />
    </label>
    <button aria-label="Command history" className="flex w-[26px] items-center justify-center bg-[#dedede] pl-3 text-[#222]"><Caret className="rotate-180" /></button>
  </div>
);

const Canvas = () => (
  <main className="relative flex min-h-[502px] flex-1 overflow-hidden bg-[#888]">
    <Sheet />
    <div className="absolute right-[11px] top-[9px] flex gap-2">
      <button aria-label="Minimize drawing"><Glyph w={13} h={11}><rect x="1" y="5" width="11" height="4" fill="#fff" stroke="#444" /></Glyph></button>
      <button aria-label="Restore drawing"><Glyph w={12} h={11}><path d="M4 3V1.500h6.500V8H9" stroke="#444" strokeWidth="3" /><path d="M4 3V1.500h6.500V8H9" stroke="#fff" /><rect x="1.500" y="4" width="6" height="6" fill="#444" stroke="#fff" strokeWidth="1.800" /></Glyph></button>
      <button aria-label="Close drawing"><Glyph w={11} h={11}><path d="M2 2l7 7M9 2L2 9" stroke="#444" strokeWidth="4" /><path d="M2 2l7 7M9 2L2 9" stroke="#fff" strokeWidth="2" /></Glyph></button>
    </div>
    <NavBar />
    <CommandLine />
  </main>
);

const StatusButton = ({ label, active, children }) => (
  <button aria-label={label} className={`flex h-[22px] w-[23px] items-center justify-center text-[#eee] ${active ? 'bg-[#5585bd]' : ''}`}>
    {children}
  </button>
);

const Group = ({ children }) => (
  <div className="flex items-center gap-[2px] border border-[#757575] bg-[#464646] text-white">{children}</div>
);

const StatusCaret = () => <button aria-label="More options" className="flex w-[12px] justify-center"><Caret /></button>;

const StatusBar = () => (
  <footer className="flex h-[29px] items-start bg-[#363636] pl-[11px] text-[12px] text-[#bdbdbd]">
    <button className={`h-[18px] w-[59px] bg-[#555] leading-4 ${footShape}`}>Model</button>
    <button className={`h-[18px] w-[66px] bg-gradient-to-b from-[#888] to-[#606060] font-bold leading-4 text-white ${footShape}`}>Layout1</button>
    <button aria-label="New layout" className="ml-1 flex h-4 w-[22px] items-center justify-center rounded-bl-md rounded-br-lg bg-[#505050]">
      <Glyph size={8}><path d="M4 0v8M0 4h8" stroke="#ddd" strokeWidth="1.500" /></Glyph>
    </button>
    <div className="ml-auto flex h-[27px] gap-px">
      <Group><button className="px-[3px]">PAPER</button></Group>
      <Group>
        <StatusButton label="Grid"><Glyph size={16}><path d="M1 1v14h15M1 10h5v5" /></Glyph></StatusButton>
        <StatusButton label="Polar" active><Glyph><circle cx="8" cy="9" r="6.500" /><path d="M8 9h10M8 9l7-7M11 4v5" /></Glyph></StatusButton>
        <StatusCaret />
        <StatusButton label="Isometric"><Glyph size={16}><path d="M8 1v14" stroke="#4bc46c" /><path d="M1 2l14 13" stroke="#e06a6a" /><path d="M8 6v5" stroke="#fff" /></Glyph></StatusButton>
        <StatusCaret />
      </Group>
      <Group>
        <StatusButton label="Object tracking" active><Glyph size={16}><path d="M14 3L1 14h15M9 7v3" strokeWidth="1.500" /></Glyph></StatusButton>
        <StatusButton label="Object snap" active><Glyph><path d="M7 4h9v12H4V8" strokeWidth="1.500" /><path d="M1 1h5v5H1z" stroke="#fff" /></Glyph></StatusButton>
        <StatusCaret />
      </Group>
      <Group>
        <StatusButton label="Selection"><Glyph size={16}><path d="M1 5V1h4M7 1h8v14H1V7" strokeDasharray="3 2" /><path d="M6 7h6v6H6zM2 2l4 4" /></Glyph></StatusButton>
        <StatusButton label="Annotation visibility"><Glyph size={16}><path d="M6 1l3 4 5 10-5-3-1-2-2 1-5 4 4-8z" fill={LIGHT} stroke="none" /><circle cx="13" cy="3.500" r="2.200" /></Glyph></StatusButton>
        <StatusButton label="Auto scale"><Glyph size={16}><path d="M6 1l3 4 5 10-5-3-1-2-2 1-5 4 4-8z" fill={LIGHT} stroke="none" /><path d="M14 0l-3 4h4l-3 4" /></Glyph></StatusButton>
      </Group>
      <Group>
        <StatusButton label="Workspace">
          <Glyph size={18}>
            <path d="M9 1v16M1 9h16M3.300 3.300l11.400 11.400M14.700 3.300L3.300 14.700" strokeWidth="3.200" />
            <circle cx="9" cy="9" r="4.200" strokeWidth="3.500" />
            <circle cx="9" cy="9" r="2.500" fill="#464646" stroke="none" />
          </Glyph>
        </StatusButton>
        <StatusCaret />
      </Group>
      <Group><StatusButton label="Add"><Glyph size={16}><path d="M8 0v16M0 8h16" strokeWidth="2" /></Glyph></StatusButton></Group>
      <Group><StatusButton label="Isolate objects"><Glyph size={17}><path d="M1 1h6v6H1zM8 10l4 6H4z" /><circle cx="13" cy="7" r="3" /></Glyph></StatusButton></Group>
      <Group>
        <StatusButton label="Plot notice"><Glyph size={16}><rect x="2" y="1" width="10" height="10" fill="#8cc8f2" stroke="none" /><rect x="1" y="7" width="6" height="6" fill={GOLD} stroke="none" /><path d="M4 2v10M1 6h8" stroke="#fff" /><path d="M8 12l3 3 5-6" stroke="#35b34a" strokeWidth="2" /></Glyph></StatusButton>
        <StatusButton label="Data link"><Glyph size={16}><rect x="0.500" y="4" width="9" height="5" rx="2.500" stroke="#dd8c5c" /><rect x="6.500" y="7" width="9" height="5" rx="2.500" stroke="#dd8c5c" /></Glyph></StatusButton>
      </Group>
      <Group>
        <StatusButton label="Clean screen"><Glyph size={16}><path d="M1 2.500h14v11H1z" /><path d="M4 11l3-3M9 8l3-3M4 8v3h3M9 5h3v3" /></Glyph></StatusButton>
        <StatusButton label="Customization"><Menu size={22} strokeWidth={2} /></StatusButton>
      </Group>
    </div>
  </footer>
);

const App = () => (
  <div className="flex min-h-screen flex-col overflow-hidden border border-[#9bbf4e] bg-[#363636] font-['Open_Sans','Noto_Sans',sans-serif]">
    <TitleBar />
    <RibbonTabs />
    <Ribbon />
    <FileTabs />
    <Canvas />
    <StatusBar />
  </div>
);

export default App;
